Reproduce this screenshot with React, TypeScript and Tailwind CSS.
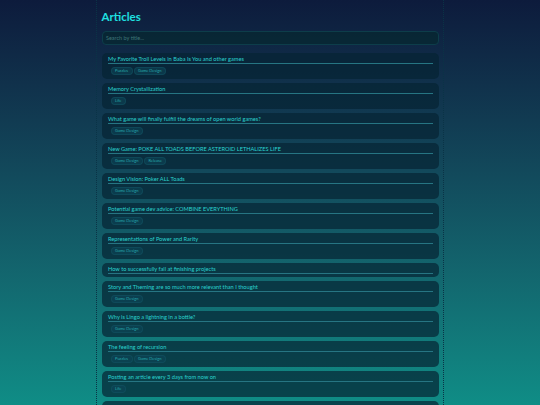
const articles = [
  { title: "My Favorite Troll Levels in Baba Is You and other games", tags: ["Puzzles", "Game Design"] },
  { title: "Memory Crystallization", tags: ["Life"] },
  { title: "What game will finally fulfill the dreams of open world games?", tags: ["Game Design"] },
  { title: "New Game: POKE ALL TOADS BEFORE ASTEROID LETHALIZES LIFE", tags: ["Game Design", "Release"] },
  { title: "Design Vision: Poker ALL Toads", tags: ["Game Design"] },
  { title: "Potential game dev advice: COMBINE EVERYTHING", tags: ["Game Design"] },
  { title: "Representations of Power and Rarity", tags: ["Game Design"] },
  { title: "How to successfully fail at finishing projects", tags: [] },
  { title: "Story and Theming are so much more relevant than I thought", tags: ["Game Design"] },
  { title: "Why is Lingo a lightning in a bottle?", tags: ["Game Design"] },
  { title: "The feeling of recursion", tags: ["Puzzles", "Game Design"] },
  { title: "Posting an article every 3 days from now on", tags: ["Life"] },
  { title: "Games should show their hints", tags: ["Game Design"] },
];

function Tag({ label }: { label: string }) {
  return (
    <span className="flex h-[8px] items-center rounded-full border border-[#125563]/50 bg-[#0e4557]/60 px-[3.5px] text-[4px] leading-none text-[#27a8ac]">
      {label}
    </span>
  );
}

function ArticleCard({ title, tags }: { title: string; tags: string[] }) {
  return (
    <div className="rounded-[5px] bg-[#062433]/70 pt-[2px] pr-[6px] pb-[3px] pl-[6.5px]">
      <div className="border-b border-[#267583] pb-[1px] text-[5.65px] leading-[7px] text-[#2ad2ce]">{title}</div>
      {tags.length > 0 && (
        <div className="mt-[3px] flex gap-[1px] pb-[1px] pl-[2.5px]">
          {tags.map((t) => (
            <Tag key={t} label={t} />
          ))}
        </div>
      )}
    </div>
  );
}

export default function App() {
  return (
    <div className="h-[405px] overflow-hidden bg-gradient-to-b from-[#0d1b3c] to-[#0f8d86] font-['Lato',sans-serif]">
      <div className="mx-auto h-full w-[348px] border-x border-dotted border-[#0a3346] px-[4.5px]">
        <h1 className="pt-[10px] pb-[1px] text-[11.5px] leading-[14px] font-bold text-[#1fe0e0]">Articles</h1>
        <div className="mt-[6px] flex h-[14px] items-center rounded-[4px] border border-[#0d3d4a] bg-[#06282f]/70 px-[3.5px] text-[5.5px] text-[#3f7577]">
          Search by title...
        </div>
        <div className="mt-[8px] flex flex-col gap-[4px]">
          {articles.map((a) => (
            <ArticleCard key={a.title} title={a.title} tags={a.tags} />
          ))}
        </div>
      </div>
    </div>
  );
}
